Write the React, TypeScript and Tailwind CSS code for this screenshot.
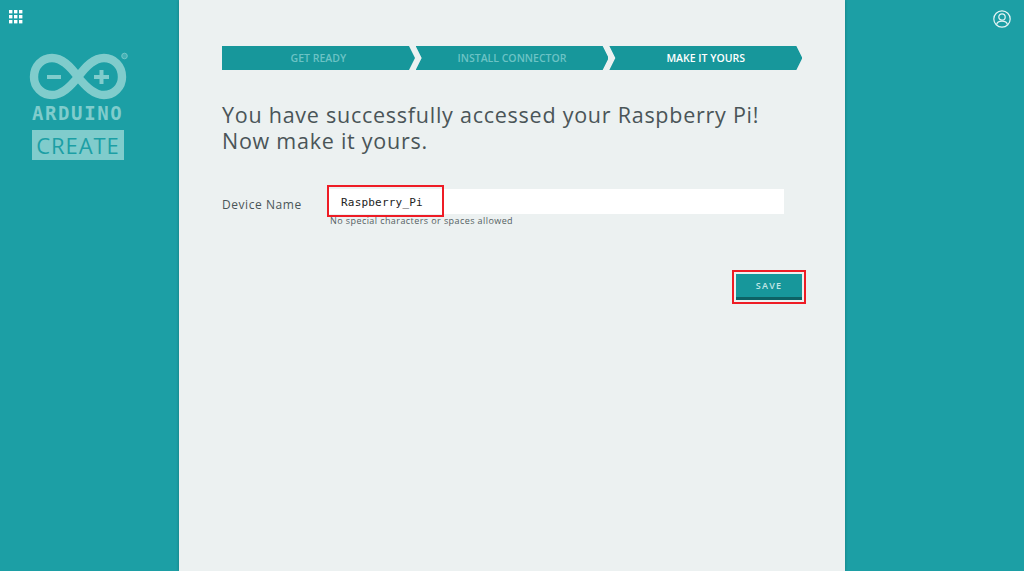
import React from "react";

function Logo() {
  return (
    <svg width="104" height="50" viewBox="26 52 104 50" className="block" fill="none">
      <path d="M78 77C70 66 62 58 52 58C42 58 34 66 34 77C34 87 42 95 52 95C62 95 70 87 78 77C86 66 94 58 104 58C114 58 122 66 122 77C122 87 114 95 104 95C94 95 86 87 78 77Z" stroke="#80cccc" strokeWidth="8.4" />
      <rect x="47" y="75" width="14" height="4" fill="#80cccc" />
      <rect x="94" y="75" width="15" height="4" fill="#80cccc" />
      <rect x="99.5" y="70" width="4" height="14" fill="#80cccc" />
      <circle cx="124.5" cy="56" r="2.8" stroke="#80cccc" strokeWidth="0.8" fill="#80cccc" fillOpacity="0.4" />
    </svg>
  );
}

function GridIcon() {
  const pts = [0, 5, 10];
  return (
    <svg width="14" height="14" viewBox="0 0 14 14" className="block">
      {pts.map((y) => pts.map((x) => <rect key={`${x}-${y}`} x={x} y={y} width="3.4" height="3.4" fill="#fff" />))}
    </svg>
  );
}

function UserIcon() {
  return (
    <svg width="18" height="18" viewBox="0 0 18 18" fill="none" stroke="#e6f5f5" strokeWidth="1.2" className="block">
      <circle cx="9" cy="9" r="8.2" />
      <circle cx="9" cy="7" r="3.2" />
      <path d="M3.6 14.6C4 12.2 6.2 11.2 9 11.2C11.8 11.2 14 12.2 14.4 14.6" />
    </svg>
  );
}

export default function App() {
  return (
    <div className="flex h-[571px] w-[1024px] overflow-hidden bg-[#1c9fa5] font-['Open_Sans',sans-serif]">
      <aside className="w-[179px] shrink-0">
        <div className="pl-[9px] pt-[10px]"><GridIcon /></div>
        <div className="ml-[26px] mt-[28px] flex w-[104px] flex-col">
          <Logo />
          <div className="pl-[6px] font-['DejaVu_Sans_Mono',monospace] text-[19px] font-bold leading-[22px] tracking-[1.6px] text-[#80cccc]">ARDUINO</div>
          <div className="ml-[6px] mt-[6px] flex h-[30px] w-[92px] items-center justify-center bg-[#80cccc] text-[22px] leading-none tracking-[0.9px] text-[#1c9fa5]">CREATE</div>
        </div>
      </aside>

      <main className="relative w-[666px] shrink-0 bg-[#ecf1f1] pl-[43px] pt-[46px] shadow-[0_0_3px_rgba(0,0,0,0.25)]">
        <div className="flex h-[24px] w-[580px] text-[10.5px] font-semibold">
          <div className="flex w-[193px] items-center justify-center bg-[#17979b] pt-[2px] text-[#6cc3c5] [clip-path:polygon(0_0,187px_0,193px_50%,187px_100%,0_100%)]">GET READY</div>
          <div className="ml-[1px] flex w-[193px] items-center justify-center bg-[#17979b] pt-[2px] text-[#6cc3c5] [clip-path:polygon(0_0,187px_0,193px_50%,187px_100%,0_100%,6px_50%)]">INSTALL CONNECTOR</div>
          <div className="ml-[1px] flex w-[193px] items-center justify-center bg-[#17979b] pt-[2px] text-white [clip-path:polygon(0_0,187px_0,193px_50%,187px_100%,0_100%,6px_50%)]">MAKE IT YOURS</div>
        </div>

        <h1 className="mt-[32px] text-[21.5px] font-normal leading-[26px] tracking-[0.75px] text-[#4a5558]">
          You have successfully accessed your Raspberry Pi!<br />Now make it yours.
        </h1>

        <div className="mt-[35px] flex">
          <label className="w-[105px] shrink-0 pt-[7px] text-[12px] leading-[18px] tracking-[0.55px] text-[#4a5558]">Device Name</label>
          <div className="w-[457px]">
            <div className="flex h-[25px] items-center bg-white pl-[14px] pt-[3px] font-['DejaVu_Sans_Mono',monospace] text-[11px] tracking-[0.2px] text-[#222]">Raspberry_Pi</div>
            <p className="mt-[1px] pl-[3px] text-[9px] leading-[12px] tracking-[0.42px] text-[#555f62]">No special characters or spaces allowed</p>
          </div>
        </div>

        <div className="mt-[47px] flex w-[580px] justify-end">
          <button className="h-[26px] w-[66px] border-b-[3px] border-[#0d6265] bg-[#17979b] text-[9px] font-semibold tracking-[1.2px] text-[#c4e6e6]">SAVE</button>
        </div>

        <div className="absolute left-[148px] top-[185px] h-[32px] w-[117px] border-2 border-[#ee1c25]" />
        <div className="absolute left-[553px] top-[270px] h-[34px] w-[74px] border-2 border-[#ee1c25]" />
      </main>

      <aside className="flex flex-1 justify-end pr-[13px] pt-[10px]">
        <UserIcon />
      </aside>
    </div>
  );
}
